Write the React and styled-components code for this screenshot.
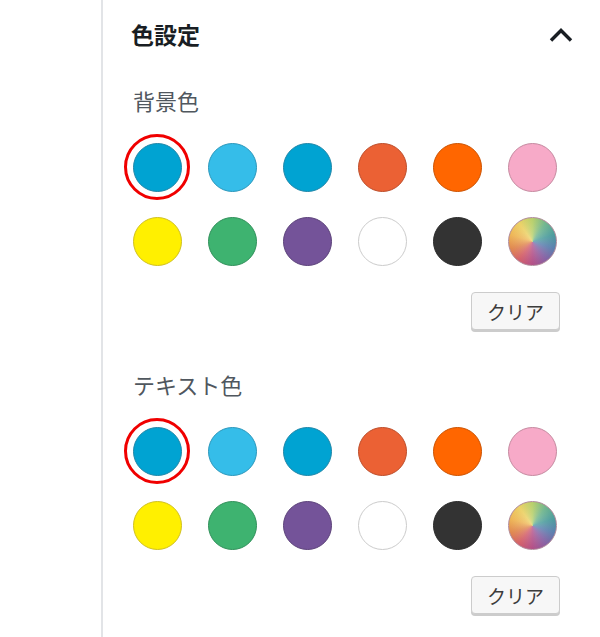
import React from "react";
import styled, { createGlobalStyle } from "styled-components";

const Global = createGlobalStyle`
  html, body { margin: 0; padding: 0; background: #fff; }
  body { font-family: "Noto Sans CJK JP", "Noto Sans", sans-serif; }
`;

const Page = styled.div`
  display: flex;
  width: 600px;
  height: 637px;
  overflow: hidden;
`;

const Gutter = styled.div`
  width: 101px;
  flex: none;
  border-right: 2px solid #e2e4e7;
`;

const Panel = styled.div`
  flex: 1;
  min-width: 0;
  padding: 23px 40px 0 28px;
  box-sizing: border-box;
`;

const Header = styled.div`
  display: flex;
  align-items: center;
  justify-content: space-between;
  height: 22px;
  margin-bottom: 44px;
  margin-right: -14px;
`;

const Title = styled.h2`
  margin: 0;
  font-size: 23px;
  line-height: 22px;
  font-weight: 700;
  color: #191e23;
`;

const Chevron = styled.svg`
  width: 26px;
  height: 18px;
  margin-top: 2px;
`;

const Section = styled.div`
  display: flex;
  flex-direction: column;
  margin-bottom: 43px;
`;

const Label = styled.div`
  font-size: 22px;
  line-height: 22px;
  color: #50575e;
  padding-left: 2px;
  margin-bottom: 23px;
`;

const Grid = styled.div`
  display: grid;
  grid-template-columns: repeat(6, 66px);
  column-gap: 9px;
  row-gap: 8px;
  margin-left: -7px;
`;

const Cell = styled.div`
  width: 66px;
  height: 66px;
  border-radius: 50%;
  box-sizing: border-box;
  display: flex;
  align-items: center;
  justify-content: center;
  border: 3px solid ${(p) => (p.$selected ? "#f00000" : "transparent")};
`;

const Swatch = styled.div`
  width: 49px;
  height: 49px;
  border-radius: 50%;
  box-sizing: border-box;
  background: ${(p) => p.$color};
  border: 1px solid ${(p) => p.$edge};
`;

const Rainbow = styled(Swatch)`
  background:
    radial-gradient(circle at 50% 50%, rgba(255,255,255,0.25), rgba(255,255,255,0) 70%),
    conic-gradient(from 0deg, #b7cf6a, #6fb58e, #4c9c9d, #5b7fae, #8760a3, #b24f87, #d35f6a, #e0884e, #eeb656, #ecd165, #b7cf6a);
`;

const Actions = styled.div`
  display: flex;
  justify-content: flex-end;
  margin-top: 18px;
`;

const ClearButton = styled.button`
  width: 89px;
  height: 38px;
  box-sizing: border-box;
  border: 1px solid #cccccc;
  border-radius: 4px;
  background: #f7f7f7;
  box-shadow: 0 2px 0 #cccccc;
  font-family: "Noto Sans CJK JP", "Noto Sans", sans-serif;
  font-size: 19px;
  color: #3c3c3c;
  padding: 0;
  cursor: pointer;
`;

const colors = [
  ["#00a3d2", "#1e86a8"],
  ["#35bde9", "#2b97bb"],
  ["#00a3d2", "#1e86a8"],
  ["#eb6134", "#bd4d2a"],
  ["#ff6600", "#cc5200"],
  ["#f7aac8", "#c58aa0"],
  ["#fff000", "#d0c020"],
  ["#3eb370", "#30905a"],
  ["#745399", "#5c427a"],
  ["#ffffff", "#cccccc"],
  ["#333333", "#2a2a2a"],
  null,
];

function Palette() {
  return (
    <Grid>
      {colors.map((c, i) => (
        <Cell key={i} $selected={i === 0}>
          {c ? <Swatch $color={c[0]} $edge={c[1]} /> : <Rainbow $color="#ccc" $edge="#b08a9a" />}
        </Cell>
      ))}
    </Grid>
  );
}

function ColorSection({ label }) {
  return (
    <Section>
      <Label>{label}</Label>
      <Palette />
      <Actions>
        <ClearButton>クリア</ClearButton>
      </Actions>
    </Section>
  );
}

export default function App() {
  return (
    <>
      <Global />
      <Page>
        <Gutter />
        <Panel>
          <Header>
            <Title>色設定</Title>
            <Chevron viewBox="0 0 26 18">
              <path d="M3 14.5 L13 4.5 L23 14.5" fill="none" stroke="#191e23" strokeWidth="3.4" />
            </Chevron>
          </Header>
          <ColorSection label="背景色" />
          <ColorSection label="テキスト色" />
        </Panel>
      </Page>
    </>
  );
}
